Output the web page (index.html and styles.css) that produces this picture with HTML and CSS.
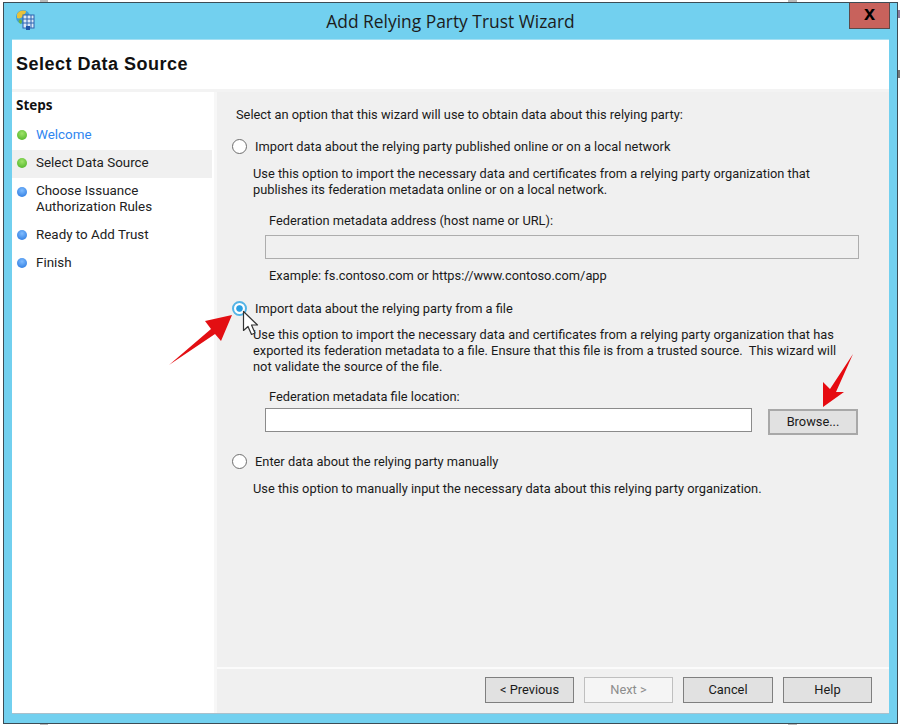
FILE: index.html
```html
<!DOCTYPE html>
<html lang="en">
<head>
<meta charset="utf-8">
<title>Add Relying Party Trust Wizard</title>
<link rel="stylesheet" href="styles.css">
</head>
<body>
<div class="page">
  <span class="handle handle-tl"></span>
  <span class="handle handle-tr"></span>
  <span class="handle handle-bl"></span>
  <span class="handle handle-br"></span>
  <span class="handle handle-r1"></span>
  <span class="handle handle-r2"></span>
  <div class="window">
    <div class="titlebar">
      <svg class="app-icon" viewBox="0 0 22 22" width="22" height="22">
        <circle cx="9" cy="8" r="7" fill="#3f9fd8"/>
        <path d="M3 5c2-4 7-4 9-3 0 3-2 3-3 5S5 10 3 9z" fill="#e8c23c"/>
        <path d="M5 11c2-1 3 0 3 2l-1 2c-2-1-3-2-2-4z" fill="#6db33f"/>
        <rect x="9" y="6" width="11" height="13" fill="#dbe9f7" stroke="#2b62b0"/>
        <path d="M9 10h11M9 14h11M13 6v13M17 6v13" stroke="#2b62b0" stroke-width="1" fill="none"/>
        <rect x="12" y="17" width="4" height="4" fill="#1f56a8"/>
      </svg>
      <div class="title">Add Relying Party Trust Wizard</div>
      <div class="close">x</div>
    </div>
    <div class="client">
      <header class="page-head">Select Data Source</header>
      <div class="gap-line"></div>
      <div class="body">
        <nav class="steps">
          <div class="steps-head">Steps</div>
          <div class="step done link"><span class="dot green"></span><span>Welcome</span></div>
          <div class="step done current"><span class="dot green"></span><span>Select Data Source</span></div>
          <div class="step tall"><span class="dot blue"></span><span>Choose Issuance<br>Authorization Rules</span></div>
          <div class="step"><span class="dot blue"></span><span>Ready to Add Trust</span></div>
          <div class="step"><span class="dot blue"></span><span>Finish</span></div>
        </nav>
        <main class="panel">
          <div class="form">
            <p class="intro">Select an option that this wizard will use to obtain data about this relying party:</p>

            <label class="radio-row first"><span class="radio"></span>Import data about the relying party published online or on a local network</label>
            <p class="desc">Use this option to import the necessary data and certificates from a relying party organization that<br>publishes its federation metadata online or on a local network.</p>
            <div class="field-label online-label">Federation metadata address (host name or URL):</div>
            <input class="text-input wide" type="text" disabled>
            <div class="example">Example: fs.contoso.com or https://www.contoso.com/app</div>

            <label class="radio-row second"><span class="radio checked"></span>Import data about the relying party from a file</label>
            <p class="desc file-desc">Use this option to import the necessary data and certificates from a relying party organization that has<br>exported its federation metadata to a file. Ensure that this file is from a trusted source.&nbsp; This wizard will<br>not validate the source of the file.</p>
            <div class="field-label file-label">Federation metadata file location:</div>
            <div class="file-row">
              <input class="text-input file" type="text">
              <button class="btn browse" type="button">Browse...</button>
            </div>

            <label class="radio-row third"><span class="radio"></span>Enter data about the relying party manually</label>
            <p class="desc manual">Use this option to manually input the necessary data about this relying party organization.</p>
          </div>
          <footer class="actions">
            <button class="btn" type="button">&lt; Previous</button>
            <button class="btn disabled" type="button">Next &gt;</button>
            <button class="btn cancel" type="button">Cancel</button>
            <button class="btn" type="button">Help</button>
          </footer>
        </main>
      </div>
    </div>
  </div>
  <svg class="annotations" viewBox="0 0 900 725" width="900" height="725">
    <polygon points="169,365 211,329 205,321 232,315 221,341 215,334" fill="#e30f13"/>
    <polygon points="853,354 836,392 844,392 823,407 823,382 830,389" fill="#e60a10"/>
    <path d="M243.5 311.500v19l4.500-4 3.500 8 3.500-1.500-3.500-8h6z" fill="#fff" stroke="#333" stroke-width="1.200" stroke-linejoin="round"/>
  </svg>
</div>
</body>
</html>
```
FILE: styles.css
```css
* { box-sizing: border-box; }
html, body { margin: 0; padding: 0; background: #fff; }
body {
  font-family: Roboto, "Open Sans", sans-serif;
  font-size: 12.840px;
  color: #1a1a1a;
}
.page { position: relative; width: 900px; height: 725px; overflow: hidden; padding: 2px 2px 1px 3px; }

.handle { position: absolute; background: #b9b9b9; }
.handle-tl { left: 40px; top: 0; width: 8px; height: 2px; }
.handle-tr { left: 788px; top: 0; width: 9px; height: 2px; }
.handle-bl { left: 40px; top: 724px; width: 8px; height: 1px; }
.handle-br { left: 788px; top: 724px; width: 9px; height: 1px; }
.handle-r1 { left: 898px; top: 10px; width: 2px; height: 8px; background: #8e7a9c; }
.handle-r2 { left: 898px; top: 70px; width: 2px; height: 8px; background: #777; }

.window {
  height: 100%;
  display: flex;
  flex-direction: column;
  background: #72d0ef;
  border: 1px solid #3c4c55;
}
.titlebar { position: relative; height: 37px; flex: none; display: flex; justify-content: center; }
.app-icon { position: absolute; left: 10px; top: 6px; }
.title { font-family: "Open Sans", sans-serif; font-size: 17.400px; line-height: 36px; color: #1c1c1c; }
.close {
  position: absolute;
  right: 7px;
  top: -1px;
  width: 41px;
  height: 27px;
  background: #c8625c;
  border: 1px solid #5b4a4a;
  border-top-color: #3c4c55;
  color: #000;
  font: bold 20px/20px "Liberation Sans", sans-serif;
  text-align: center;
}
.client {
  flex: 1;
  min-height: 0;
  margin: 0 8px 9px 8px;
  display: flex;
  flex-direction: column;
  background: #f7f7f7;
  border-bottom: 1px solid #a9c0cc;
  box-shadow: 0 -1px 0 #a6e0f3;
}
.page-head {
  flex: none;
  height: 49px;
  background: #fff;
  padding: 0 0 0 4px;
  font-family: "Liberation Sans", sans-serif;
  font-size: 18px;
  font-weight: 700;
  letter-spacing: .5px;
  line-height: 48px;
  color: #111;
}
.gap-line { flex: none; height: 3px; background: #f3f3f3; }
.body { flex: 1; min-height: 0; display: flex; }

.steps { width: 202px; flex: none; background: #fff; margin-right: 3px; }
.steps-head { height: 30px; padding-left: 4px; font-family: "Open Sans", sans-serif; font-weight: 700; font-size: 13.500px; line-height: 26px; color: #111; }
.step { height: 28px; display: flex; align-items: center; padding: 0 0 2px 5px; line-height: 16px; color: #222; margin-right: 2px; font-size: 13.400px; }
.step.tall { height: 44px; padding-bottom: 2px; }
.step.link { color: #2f86f0; }
.step.current { background: #f0f0f0; }
.dot { width: 10px; height: 10px; border-radius: 50%; margin-right: 9px; flex: none; position: relative; top: 0; }
.dot.green { background: radial-gradient(circle at 50% 35%, #9fe36a, #45ae1f); }
.dot.blue { background: radial-gradient(circle at 50% 35%, #7fbcff, #2272dc); }
.step.tall .dot { top: -7px; }

.panel { flex: 1; min-width: 0; background: #f0f0f0; display: flex; flex-direction: column; }
.form { flex: 1; padding: 15px 30px 0 15px; border-bottom: 2px solid #fbfbfb; }
p { margin: 0; }
.intro { line-height: 16px; margin-left: 4px; }
.radio-row { display: flex; align-items: center; height: 16px; line-height: 16px; }
.radio-row.first { margin-top: 16px; }
.radio-row.second { margin-top: 17px; }
.radio-row.third { margin-top: 19px; }
.radio {
  width: 15px; height: 15px; flex: none;
  border: 1px solid #6e6e6e; border-radius: 50%; background: #fff;
  margin-right: 8px;
  position: relative;
  top: -1px;
}
.radio.checked {
  border: 2px solid #55b4e6;
  background: radial-gradient(circle, #2a9fe2 0 2.800px, #fff 3.800px);
}
.desc { margin: 11px 0 0 21px; line-height: 16px; white-space: nowrap; }
.desc.file-desc { margin-top: 10px; }
.field-label { margin-left: 37px; line-height: 16px; }
.online-label { margin-top: 15px; }
.file-label { margin-top: 14px; }
.text-input { display: block; height: 24px; margin: 0; padding: 0; border: 1px solid #8b8b8b; background: #fff; }
.text-input.wide { width: 594px; margin: 6px 0 0 33px; background: #f0f0f0; border-color: #adadad; }
.example { margin: 9px 0 0 37px; line-height: 16px; }
.file-row { display: flex; align-items: flex-start; margin: 3px 0 0 33px; }
.text-input.file { width: 487px; }
.btn {
  width: 89px; height: 26px; padding: 0;
  font: inherit; color: #1a1a1a; line-height: 22px;
  background: #e1e1e1; border: 1px solid #7f7f7f;
  border-radius: 0;
}
.btn.cancel { width: 90px; }
.btn.browse { width: 90px; margin: 1px 0 0 16px; border: 2px solid #a8a8a8; }
.btn.disabled { background: #f5f5f5; border-color: #bfbfbf; color: #8d8d8d; }
.actions { flex: none; height: 44px; display: flex; gap: 10px; justify-content: flex-end; padding: 8px 17px 0 0; }

.annotations { position: absolute; left: 0; top: 0; pointer-events: none; }
```
